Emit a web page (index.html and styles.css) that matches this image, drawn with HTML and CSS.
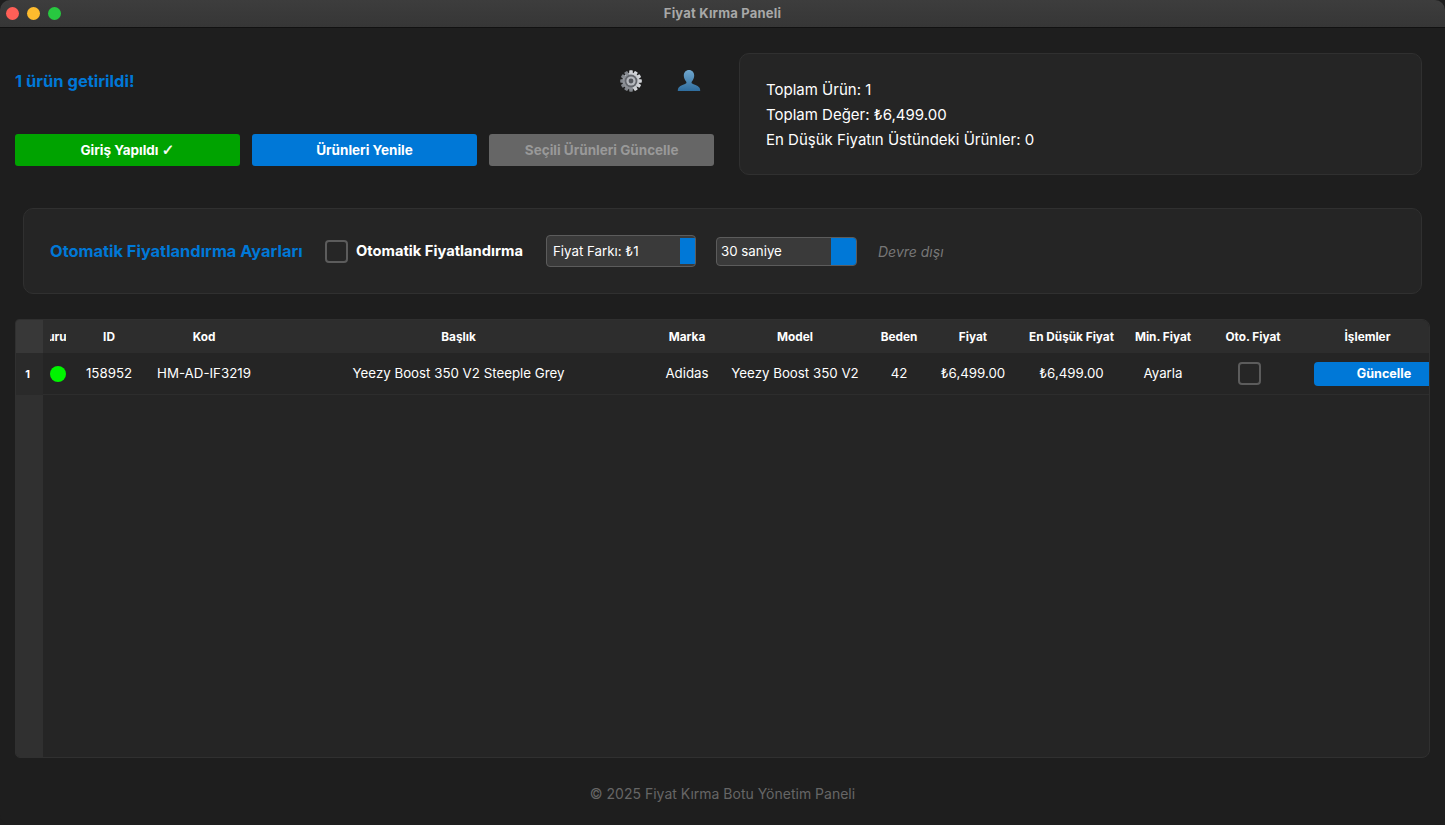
FILE: index.html
```html
<!DOCTYPE html>
<html lang="tr">
<head>
<meta charset="utf-8">
<title>Fiyat Kırma Paneli</title>
<link rel="stylesheet" href="styles.css">
</head>
<body>
<div class="window">
  <header class="titlebar">
    <div class="lights"><span class="light red"></span><span class="light yellow"></span><span class="light green"></span></div>
    <div class="window-title">Fiyat Kırma Paneli</div>
  </header>
  <main class="content">
    <section class="top">
      <div class="top-left">
        <div class="msg-row">
          <div class="msg">1 ürün getirildi!</div>
          <div class="icons">
            <svg class="gear" viewBox="0 0 24 24" width="24" height="24" aria-hidden="true">
              <defs>
                <linearGradient id="g1" x1="0" y1="0" x2="0" y2="1"><stop offset="0" stop-color="#d8dade"/><stop offset="1" stop-color="#7c8086"/></linearGradient>
              </defs>
              <g fill="url(#g1)">
                <circle cx="12" cy="12" r="8.6"/>
                <rect x="10.2" y="1.2" width="3.6" height="21.6" rx=".8"/>
                <rect x="10.2" y="1.2" width="3.6" height="21.6" rx=".8" transform="rotate(30 12 12)"/>
                <rect x="10.2" y="1.2" width="3.6" height="21.6" rx=".8" transform="rotate(60 12 12)"/>
                <rect x="10.2" y="1.2" width="3.6" height="21.6" rx=".8" transform="rotate(90 12 12)"/>
                <rect x="10.2" y="1.2" width="3.6" height="21.6" rx=".8" transform="rotate(120 12 12)"/>
                <rect x="10.2" y="1.2" width="3.6" height="21.6" rx=".8" transform="rotate(150 12 12)"/>
              </g>
              <circle cx="12" cy="12" r="6.4" fill="#62656b"/>
              <circle cx="12" cy="12" r="4.6" fill="#b4b7bc"/>
              <circle cx="12" cy="12" r="2.4" fill="#53565c"/>
            </svg>
            <svg class="user" viewBox="0 0 24 24" width="24" height="24" aria-hidden="true">
              <defs>
                <linearGradient id="u1" x1="0" y1="0" x2="0" y2="1"><stop offset="0" stop-color="#6fa6cd"/><stop offset="1" stop-color="#2f6d9e"/></linearGradient>
              </defs>
              <path fill="url(#u1)" d="M12 1c3.1 0 5.2 2.4 5.2 5.6 0 2.4-1 4.5-2.3 5.8-.5.5-.5 1.6.2 2.2 1.3 1 5.5 2 7.2 3.8.7.8.9 2.1.9 3.6H.8c0-1.5.2-2.8.9-3.6 1.7-1.8 5.9-2.8 7.2-3.8.7-.6.7-1.7.2-2.2-1.3-1.3-2.3-3.4-2.3-5.8C6.8 3.4 8.9 1 12 1z"/>
            </svg>
          </div>
        </div>
        <div class="btn-row">
          <button class="btn btn-green">Giriş Yapıldı <span class="tick">✓</span></button>
          <button class="btn btn-blue">Ürünleri Yenile</button>
          <button class="btn btn-disabled">Seçili Ürünleri Güncelle</button>
        </div>
      </div>
      <div class="stats">
        <div>Toplam Ürün: 1</div>
        <div>Toplam Değer: ₺6,499.00</div>
        <div>En Düşük Fiyatın Üstündeki Ürünler: 0</div>
      </div>
    </section>

    <section class="auto">
      <div class="auto-title">Otomatik Fiyatlandırma Ayarları</div>
      <label class="auto-check"><span class="check"></span><span class="auto-label">Otomatik Fiyatlandırma</span></label>
      <div class="spin spin-price"><span class="spin-text">Fiyat Farkı: ₺1</span><span class="spin-btn"></span></div>
      <div class="spin spin-time"><span class="spin-text">30 saniye</span><span class="spin-btn"></span></div>
      <div class="auto-state">Devre dışı</div>
    </section>

    <section class="table">
      <div class="rail">
        <div class="rail-corner"></div>
        <div class="rail-num">1</div>
      </div>
      <div class="grid-area">
        <div class="row head">
          <div class="cell"><span class="clip">Durum</span></div>
          <div class="cell">ID</div>
          <div class="cell">Kod</div>
          <div class="cell">Başlık</div>
          <div class="cell">Marka</div>
          <div class="cell">Model</div>
          <div class="cell">Beden</div>
          <div class="cell">Fiyat</div>
          <div class="cell">En Düşük Fiyat</div>
          <div class="cell">Min. Fiyat</div>
          <div class="cell">Oto. Fiyat</div>
          <div class="cell">İşlemler</div>
        </div>
        <div class="row data">
          <div class="cell"><span class="dot"></span></div>
          <div class="cell">158952</div>
          <div class="cell">HM-AD-IF3219</div>
          <div class="cell">Yeezy Boost 350 V2 Steeple Grey</div>
          <div class="cell">Adidas</div>
          <div class="cell">Yeezy Boost 350 V2</div>
          <div class="cell">42</div>
          <div class="cell">₺6,499.00</div>
          <div class="cell">₺6,499.00</div>
          <div class="cell">Ayarla</div>
          <div class="cell cell-check"><span class="check"></span></div>
          <div class="cell cell-action"><button class="btn-row-update">Güncelle</button></div>
        </div>
      </div>
    </section>

    <footer class="footer">© 2025 Fiyat Kırma Botu Yönetim Paneli</footer>
  </main>
</div>
</body>
</html>
```

FILE: styles.css
```css
* { box-sizing: border-box; }
html, body { margin: 0; padding: 0; height: 100%; background: #1e1e1e; }
body { font-family: Inter, "Noto Sans", "Liberation Sans", sans-serif; color: #fff; overflow: hidden; }

.window { width: 1445px; height: 825px; display: flex; flex-direction: column; background: #1e1e1e; border-radius: 10px; overflow: hidden; }

.titlebar { height: 28px; flex: none; position: relative; display: flex; align-items: center; justify-content: center; background: linear-gradient(#3d3d3d, #363636); border-bottom: 1px solid #111; }
.lights { position: absolute; left: 6px; top: 7px; display: flex; gap: 8px; }
.light { width: 13px; height: 13px; border-radius: 50%; }
.red { background: #ff5f57; }
.yellow { background: #febc2e; }
.green { background: #28c840; }
.window-title { font-size: 13px; font-weight: 700; color: #a8a8a8; letter-spacing: .2px; padding-bottom: 2px; }

.content { flex: 1; display: flex; flex-direction: column; padding: 25px 15px 0; min-height: 0; }

.top { display: flex; gap: 24px; height: 122px; flex: none; }
.top-left { width: 700px; flex: none; display: flex; flex-direction: column; }
.msg-row { height: 81px; display: flex; align-items: flex-start; justify-content: space-between; }
.msg { margin-top: 18px; font-size: 16.5px; font-weight: 700; line-height: 20px; color: #0078d7; }
.icons { display: flex; gap: 34px; margin: 16px 14px 0 0; }
.icons svg { display: block; }
.btn-row { display: flex; gap: 12.5px; width: 699px; }
.btn { flex: 1; height: 32px; border: 0; border-radius: 3px; font: 700 13.5px Inter, "Noto Sans", sans-serif; color: #fff; padding: 0; }
.btn-green { background: #00a300; }
.btn-blue { background: #0078d7; }
.btn-disabled { background: #666; color: #999; }
.tick { font-family: "DejaVu Sans", sans-serif; font-size: 15px; line-height: 1; -webkit-text-stroke: .4px #fff; }

.stats { flex: 1; margin-right: 8px; background: #252525; border: 1px solid #303030; border-radius: 10px; padding: 23px 26px; font-size: 15px; line-height: 25px; color: #fff; }

.auto { flex: none; height: 86px; margin: 33px 8px 0; display: flex; align-items: center; background: #252525; border: 1px solid #303030; border-radius: 10px; padding: 0 26px; }
.auto-title { font-size: 16.4px; font-weight: 700; color: #0078d7; width: 275px; flex: none; white-space: nowrap; }
.auto-check { display: flex; align-items: center; gap: 8px; width: 221px; flex: none; }
.check { display: block; width: 23px; height: 23px; flex: none; border: 2px solid #5c5c5c; border-radius: 4px; background: #262626; }
.auto-label { font-size: 14.7px; font-weight: 700; white-space: nowrap; }
.spin { display: flex; align-items: stretch; background: #3a3a3a; border: 1px solid #5c5c5c; border-radius: 4px; font-size: 13.3px; overflow: hidden; flex: none; }
.spin-text { flex: 1; display: flex; align-items: center; }
.spin-btn { background: #0078d7; }
.spin-price { width: 150px; height: 32px; padding: 2px 0; margin-right: 20px; }
.spin-price .spin-text { padding-left: 6px; }
.spin-price .spin-btn { width: 15px; }
.spin-time { width: 141px; height: 29px; margin-right: 21px; }
.spin-time .spin-text { padding-left: 4px; }
.spin-time .spin-btn { width: 25px; }
.auto-state { font-size: 14px; font-style: italic; color: #777; white-space: nowrap; }

.table { flex: none; height: 439px; margin-top: 25px; display: flex; background: #252525; border: 1px solid #303030; border-radius: 4px 8px 8px 5px; overflow: hidden; }
.rail { width: 27px; flex: none; background: #303030; }
.rail-corner { height: 33px; background: #383838; }
.rail-num { height: 42px; padding-right: 4px; display: flex; align-items: center; justify-content: center; font-size: 11px; font-weight: 700; background: #2a2a2a; }
.grid-area { flex: 1; min-width: 0; }
.row { display: grid; grid-template-columns: 30px 72px 118px 391px 66px 150px 58px 90px 107px 76px 104px 125px; }
.head { height: 33px; background: #2d2d2d; font-size: 11.8px; font-weight: 700; }
.data { height: 42px; border-bottom: 1px solid #2d2d2d; font-size: 13.3px; padding-bottom: 1px; }
.cell { display: flex; align-items: center; justify-content: center; overflow: hidden; white-space: nowrap; min-width: 0; }
.clip { width: 16px; flex: none; display: flex; justify-content: center; overflow: hidden; }
.dot { width: 16px; height: 16px; margin-top: 1px; border-radius: 50%; background: #00f500; }
.cell-check { padding-right: 8px; }
.cell-action { justify-content: flex-start; padding-left: 9px; }
.btn-row-update { width: 140px; height: 24px; margin-top: 1px; flex: none; border: 0; border-radius: 4px; background: #0078d7; color: #fff; font: 700 12.6px Inter, "Noto Sans", sans-serif; padding: 0; }

.footer { flex: 1; display: flex; align-items: center; justify-content: center; font-size: 14px; color: #666; padding-top: 3px; }
```
